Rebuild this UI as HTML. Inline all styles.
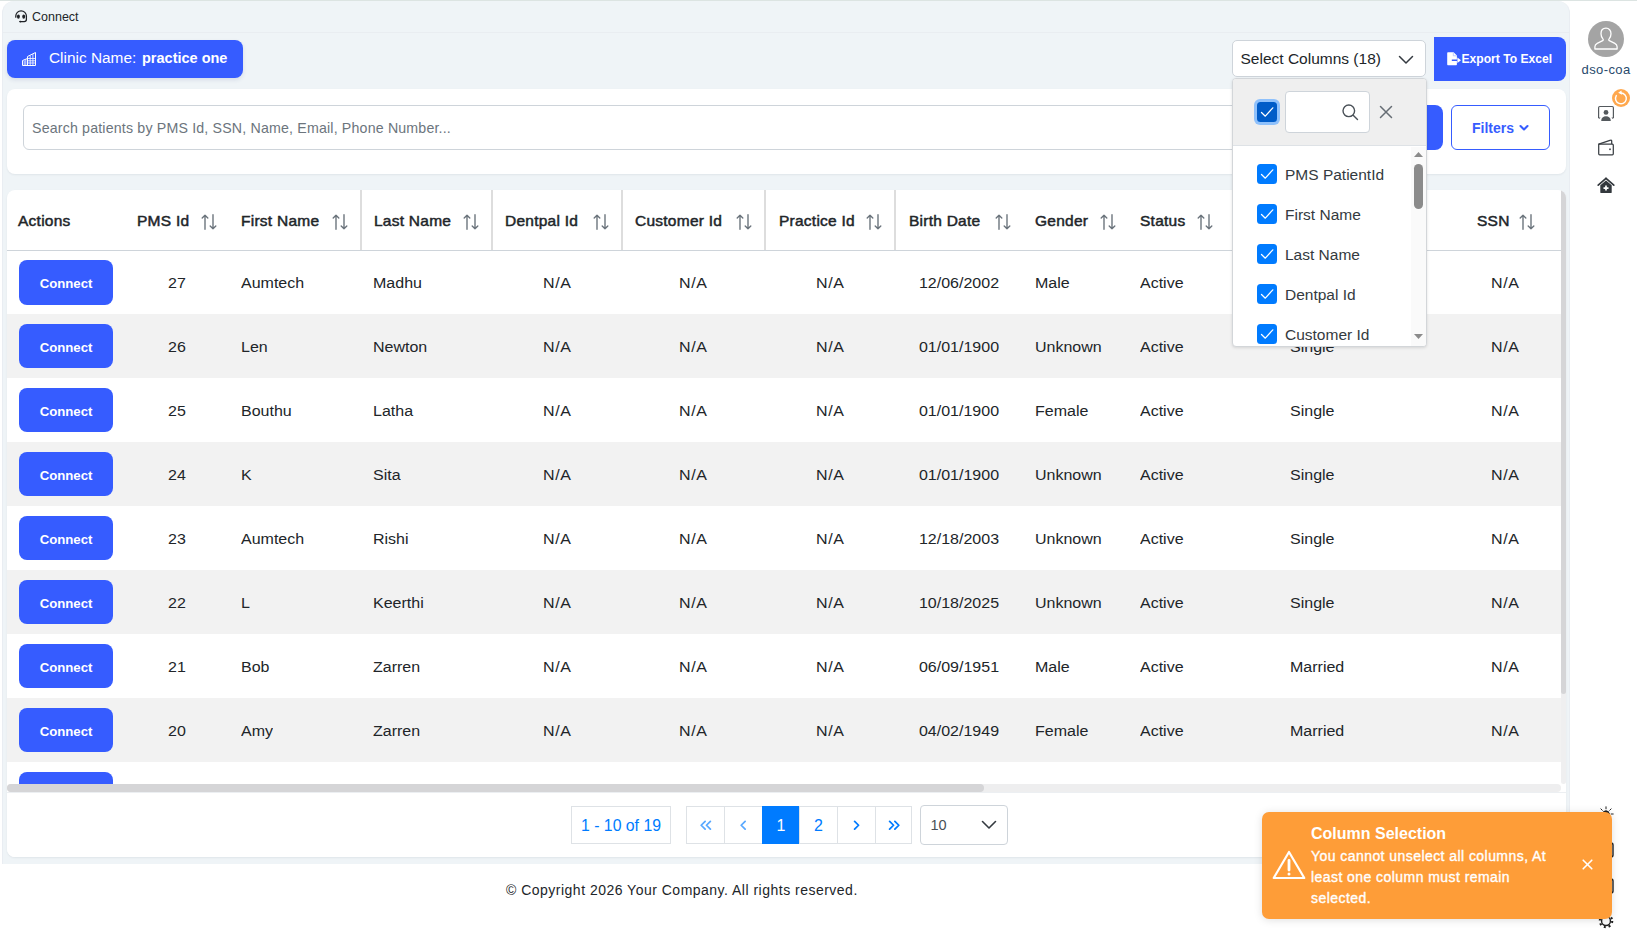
<!DOCTYPE html>
<html><head><meta charset="utf-8">
<style>
*{box-sizing:border-box;margin:0;padding:0}
html,body{width:1637px;height:939px;overflow:hidden;background:#fff;font-family:"Liberation Sans",sans-serif;color:#212529}
.abs{position:absolute}
#topstrip{left:0;top:0;width:1637px;height:1px;background:#dce4e2}
#main{left:2px;top:1px;width:1568px;height:863px;background:#eff4f7;border-radius:12px 12px 0 0;border-left:1px solid #e9edf2;border-right:1px solid #e9edf2}
#hdrline{left:2px;top:32px;width:1568px;height:1px;background:#e9edf1}
.t{position:absolute;white-space:nowrap;line-height:1}
#clinic{left:7px;top:40px;width:236px;height:38px;background:#365cff;border-radius:8px;box-shadow:0 2px 4px rgba(40,60,120,.12)}
.card{background:#fff;border-radius:8px;box-shadow:0 1px 2px rgba(56,65,74,.08)}
#searchcard{left:7px;top:89px;width:1559px;height:85px}
#searchinput{left:23px;top:105px;width:1400px;height:45px;border:1px solid #ced4da;border-radius:6px 0 0 6px;background:#fff}
#searchbtn{left:1400px;top:105px;width:43px;height:45px;background:#365cff;border-radius:0 8px 8px 0}
#filters{left:1451px;top:105px;width:99px;height:45px;border:1px solid #365cff;border-radius:6px;background:#fff}
#tablecard{left:7px;top:190px;width:1559px;height:667px;overflow:hidden}

.th{font-weight:normal;font-size:15.500px;color:#212529;-webkit-text-stroke:.5px #212529;letter-spacing:.25px;transform:scaleY(.9)}
.td{font-size:16px;color:#212529;transform:scaleY(.94)}
.cbtn{width:94px;height:44px;background:#365cff;border-radius:8px;color:#fff;font-weight:bold;font-size:13.200px;text-align:center;line-height:47px}
.pg span{position:relative;top:1px}
.pg{border:1px solid #dee2e6;background:#fff;color:#007bff;font-size:16px;display:flex;align-items:center;justify-content:center}
</style></head><body>
<div class="abs" id="topstrip"></div>
<div class="abs" id="main"></div>
<div class="abs" id="hdrline"></div>

<svg class="abs" style="left:15px;top:10px" width="13" height="13" viewBox="0 0 13 13" fill="none"><path d="M0.800 7.200V6.100a5.300 5.300 0 0 1 10.600 0V9.600c0 1.300-0.900 2.100-2.200 2.100H5.300" stroke="#1e2125" stroke-width="1.250" stroke-linecap="round"/><ellipse cx="3.400" cy="6.600" rx="1.450" ry="2.200" fill="#1e2125"/><ellipse cx="8.700" cy="6.600" rx="1.450" ry="2.200" fill="#1e2125"/><ellipse cx="5.300" cy="11.600" rx="1.200" ry=".800" fill="#1e2125"/></svg>
<div class="t" style="left:32px;top:10.5px;font-size:12.5px;color:#212529">Connect</div>


<div class="abs" style="left:1232px;top:40px;width:194px;height:37px;background:#fff;border:1px solid #ced4da;border-radius:5px"><div class="t" style="left:7.5px;top:10px;font-size:15.5px;color:#212529">Select Columns (18)</div>
<svg class="abs" style="left:165px;top:13.500px" width="16" height="10" viewBox="0 0 16 10" fill="none" stroke="#343a40" stroke-width="1.500" stroke-linecap="round" stroke-linejoin="round"><path d="M1.500 1.500L8 8L14.500 1.500"/></svg></div>
<div class="abs" style="left:1434px;top:37px;width:132px;height:44px;background:#365cff;border-radius:0 8px 8px 0"><svg class="abs" style="left:13px;top:14.800px" width="15" height="14" viewBox="0 0 15 14"><path d="M1.200 0.200h5.400l3.300 3.300v3.900h-5.100v1.600h5.100v3.200c0 0.600-0.400 1-1 1h-7.700c-0.600 0-1-0.400-1-1v-11c0-0.600 0.400-1 1-1z" fill="#fff"/><path d="M6.300 0.600v3.200h3.200" fill="none" stroke="#9fb4ff" stroke-width=".7"/><path d="M10.400 5.400L14 8.200L10.400 11z" fill="#fff"/></svg>
<div class="t" style="left:27.500px;top:16px;font-size:12.100px;font-weight:bold;color:#fff">Export To Excel</div></div>

<div class="abs" id="clinic">
<svg class="abs" style="left:15px;top:12px" width="14" height="14" viewBox="0 0 14 14" fill="none" stroke="#fff" stroke-width="1"><path d="M0.5 13.5V8.5L5.5 6.5M5.5 13.5V4.5L13.5 0.5V13.5M0.5 13.5H13.5"/><path d="M5.5 6.5H13.5M5.5 8.8H13.5M5.5 11H13.5M8.2 3.5V13.5M10.9 2V13.5M2.2 8.5V13.5M3.8 7.5V13.5" stroke-width=".8"/></svg>
<div class="t" style="left:42px;top:10.300px;font-size:15.400px;color:#fff">Clinic Name:</div>
<div class="t" style="left:135px;top:11px;font-size:14.500px;font-weight:bold;color:#fff">practice one</div>
</div>
<div class="abs card" id="searchcard"></div>
<div class="abs" id="searchinput"><div class="t" style="left:8px;top:15px;font-size:14.200px;letter-spacing:.175px;color:#6c757d">Search patients by PMS Id, SSN, Name, Email, Phone Number...</div></div>
<div class="abs" id="searchbtn"></div>
<div class="abs" id="filters"><div class="t" style="left:20px;top:14.5px;font-size:14px;font-weight:bold;color:#365cff">Filters</div>
<svg class="abs" style="left:67px;top:18px" width="10" height="8" viewBox="0 0 10 8" fill="none" stroke="#365cff" stroke-width="2.100" stroke-linecap="round" stroke-linejoin="round"><path d="M1.500 2L5 5.500L8.500 2"/></svg></div>
<div class="abs card" id="tablecard">
<!--TB-->
<div class="t th" style="left:11px;top:23.5px">Actions</div>
<div class="t th" style="left:130px;top:23.5px">PMS Id</div>
<svg class="abs" style="left:194px;top:24px" width="16" height="16" viewBox="0 0 16 16" fill="none" stroke="#6c757d" stroke-width="1.4" stroke-linecap="round" stroke-linejoin="round"><path d="M4 15.2V1.2M1.2 4L4 1.2L6.8 4M12 0.8V14.8M9.2 12L12 14.8L14.8 12"/></svg>
<div class="t th" style="left:234px;top:23.5px">First Name</div>
<svg class="abs" style="left:325px;top:24px" width="16" height="16" viewBox="0 0 16 16" fill="none" stroke="#6c757d" stroke-width="1.4" stroke-linecap="round" stroke-linejoin="round"><path d="M4 15.2V1.2M1.2 4L4 1.2L6.8 4M12 0.8V14.8M9.2 12L12 14.8L14.8 12"/></svg>
<div class="t th" style="left:367px;top:23.5px">Last Name</div>
<svg class="abs" style="left:456px;top:24px" width="16" height="16" viewBox="0 0 16 16" fill="none" stroke="#6c757d" stroke-width="1.4" stroke-linecap="round" stroke-linejoin="round"><path d="M4 15.2V1.2M1.2 4L4 1.2L6.8 4M12 0.8V14.8M9.2 12L12 14.8L14.8 12"/></svg>
<div class="t th" style="left:498px;top:23.5px">Dentpal Id</div>
<svg class="abs" style="left:586px;top:24px" width="16" height="16" viewBox="0 0 16 16" fill="none" stroke="#6c757d" stroke-width="1.4" stroke-linecap="round" stroke-linejoin="round"><path d="M4 15.2V1.2M1.2 4L4 1.2L6.8 4M12 0.8V14.8M9.2 12L12 14.8L14.8 12"/></svg>
<div class="t th" style="left:628px;top:23.5px">Customer Id</div>
<svg class="abs" style="left:729px;top:24px" width="16" height="16" viewBox="0 0 16 16" fill="none" stroke="#6c757d" stroke-width="1.4" stroke-linecap="round" stroke-linejoin="round"><path d="M4 15.2V1.2M1.2 4L4 1.2L6.8 4M12 0.8V14.8M9.2 12L12 14.8L14.8 12"/></svg>
<div class="t th" style="left:772px;top:23.5px">Practice Id</div>
<svg class="abs" style="left:859px;top:24px" width="16" height="16" viewBox="0 0 16 16" fill="none" stroke="#6c757d" stroke-width="1.4" stroke-linecap="round" stroke-linejoin="round"><path d="M4 15.2V1.2M1.2 4L4 1.2L6.8 4M12 0.8V14.8M9.2 12L12 14.8L14.8 12"/></svg>
<div class="t th" style="left:902px;top:23.5px">Birth Date</div>
<svg class="abs" style="left:988px;top:24px" width="16" height="16" viewBox="0 0 16 16" fill="none" stroke="#6c757d" stroke-width="1.4" stroke-linecap="round" stroke-linejoin="round"><path d="M4 15.2V1.2M1.2 4L4 1.2L6.8 4M12 0.8V14.8M9.2 12L12 14.8L14.8 12"/></svg>
<div class="t th" style="left:1028px;top:23.5px">Gender</div>
<svg class="abs" style="left:1093px;top:24px" width="16" height="16" viewBox="0 0 16 16" fill="none" stroke="#6c757d" stroke-width="1.4" stroke-linecap="round" stroke-linejoin="round"><path d="M4 15.2V1.2M1.2 4L4 1.2L6.8 4M12 0.8V14.8M9.2 12L12 14.8L14.8 12"/></svg>
<div class="t th" style="left:1133px;top:23.5px">Status</div>
<svg class="abs" style="left:1190px;top:24px" width="16" height="16" viewBox="0 0 16 16" fill="none" stroke="#6c757d" stroke-width="1.4" stroke-linecap="round" stroke-linejoin="round"><path d="M4 15.2V1.2M1.2 4L4 1.2L6.8 4M12 0.8V14.8M9.2 12L12 14.8L14.8 12"/></svg>
<div class="t th" style="left:1283px;top:23.5px">Marital Status</div>
<svg class="abs" style="left:1398px;top:24px" width="16" height="16" viewBox="0 0 16 16" fill="none" stroke="#6c757d" stroke-width="1.4" stroke-linecap="round" stroke-linejoin="round"><path d="M4 15.2V1.2M1.2 4L4 1.2L6.8 4M12 0.8V14.8M9.2 12L12 14.8L14.8 12"/></svg>
<div class="t th" style="left:1470px;top:23.5px">SSN</div>
<svg class="abs" style="left:1512px;top:24px" width="16" height="16" viewBox="0 0 16 16" fill="none" stroke="#6c757d" stroke-width="1.4" stroke-linecap="round" stroke-linejoin="round"><path d="M4 15.2V1.2M1.2 4L4 1.2L6.8 4M12 0.8V14.8M9.2 12L12 14.8L14.8 12"/></svg>
<div class="abs" style="left:353px;top:0;width:2px;height:61px;background:#dddddd"></div>
<div class="abs" style="left:484px;top:0;width:2px;height:61px;background:#dddddd"></div>
<div class="abs" style="left:614px;top:0;width:2px;height:61px;background:#dddddd"></div>
<div class="abs" style="left:757px;top:0;width:2px;height:61px;background:#dddddd"></div>
<div class="abs" style="left:887px;top:0;width:2px;height:61px;background:#dddddd"></div>
<div class="abs" style="left:0;top:60px;width:1554px;height:1px;background:#ced4da"></div>
<div class="abs cbtn" style="left:12px;top:70px;height:45px"><span>Connect</span></div>
<div class="t td" style="left:140px;top:85.2px;width:60px;text-align:center">27</div>
<div class="t td" style="left:234px;top:85.2px">Aumtech</div>
<div class="t td" style="left:366px;top:85.2px">Madhu</div>
<div class="t td" style="left:520.3px;top:85.2px;width:60px;text-align:center;letter-spacing:.6px">N/A</div>
<div class="t td" style="left:656.3px;top:85.2px;width:60px;text-align:center;letter-spacing:.6px">N/A</div>
<div class="t td" style="left:793.3px;top:85.2px;width:60px;text-align:center;letter-spacing:.6px">N/A</div>
<div class="t td" style="left:902px;top:85.2px;width:100px;text-align:center">12/06/2002</div>
<div class="t td" style="left:1028px;top:85.2px">Male</div>
<div class="t td" style="left:1133px;top:85.2px">Active</div>
<div class="t td" style="left:1283px;top:85.2px">Single</div>
<div class="t td" style="left:1468.3px;top:85.2px;width:60px;text-align:center;letter-spacing:.6px">N/A</div>
<div class="abs" style="left:0;top:124px;width:1554px;height:64px;background:#f2f2f2"></div>
<div class="abs cbtn" style="left:12px;top:134px"><span>Connect</span></div>
<div class="t td" style="left:140px;top:149.2px;width:60px;text-align:center">26</div>
<div class="t td" style="left:234px;top:149.2px">Len</div>
<div class="t td" style="left:366px;top:149.2px">Newton</div>
<div class="t td" style="left:520.3px;top:149.2px;width:60px;text-align:center;letter-spacing:.6px">N/A</div>
<div class="t td" style="left:656.3px;top:149.2px;width:60px;text-align:center;letter-spacing:.6px">N/A</div>
<div class="t td" style="left:793.3px;top:149.2px;width:60px;text-align:center;letter-spacing:.6px">N/A</div>
<div class="t td" style="left:902px;top:149.2px;width:100px;text-align:center">01/01/1900</div>
<div class="t td" style="left:1028px;top:149.2px">Unknown</div>
<div class="t td" style="left:1133px;top:149.2px">Active</div>
<div class="t td" style="left:1283px;top:149.2px">Single</div>
<div class="t td" style="left:1468.3px;top:149.2px;width:60px;text-align:center;letter-spacing:.6px">N/A</div>
<div class="abs cbtn" style="left:12px;top:198px"><span>Connect</span></div>
<div class="t td" style="left:140px;top:213.2px;width:60px;text-align:center">25</div>
<div class="t td" style="left:234px;top:213.2px">Bouthu</div>
<div class="t td" style="left:366px;top:213.2px">Latha</div>
<div class="t td" style="left:520.3px;top:213.2px;width:60px;text-align:center;letter-spacing:.6px">N/A</div>
<div class="t td" style="left:656.3px;top:213.2px;width:60px;text-align:center;letter-spacing:.6px">N/A</div>
<div class="t td" style="left:793.3px;top:213.2px;width:60px;text-align:center;letter-spacing:.6px">N/A</div>
<div class="t td" style="left:902px;top:213.2px;width:100px;text-align:center">01/01/1900</div>
<div class="t td" style="left:1028px;top:213.2px">Female</div>
<div class="t td" style="left:1133px;top:213.2px">Active</div>
<div class="t td" style="left:1283px;top:213.2px">Single</div>
<div class="t td" style="left:1468.3px;top:213.2px;width:60px;text-align:center;letter-spacing:.6px">N/A</div>
<div class="abs" style="left:0;top:252px;width:1554px;height:64px;background:#f2f2f2"></div>
<div class="abs cbtn" style="left:12px;top:262px"><span>Connect</span></div>
<div class="t td" style="left:140px;top:277.2px;width:60px;text-align:center">24</div>
<div class="t td" style="left:234px;top:277.2px">K</div>
<div class="t td" style="left:366px;top:277.2px">Sita</div>
<div class="t td" style="left:520.3px;top:277.2px;width:60px;text-align:center;letter-spacing:.6px">N/A</div>
<div class="t td" style="left:656.3px;top:277.2px;width:60px;text-align:center;letter-spacing:.6px">N/A</div>
<div class="t td" style="left:793.3px;top:277.2px;width:60px;text-align:center;letter-spacing:.6px">N/A</div>
<div class="t td" style="left:902px;top:277.2px;width:100px;text-align:center">01/01/1900</div>
<div class="t td" style="left:1028px;top:277.2px">Unknown</div>
<div class="t td" style="left:1133px;top:277.2px">Active</div>
<div class="t td" style="left:1283px;top:277.2px">Single</div>
<div class="t td" style="left:1468.3px;top:277.2px;width:60px;text-align:center;letter-spacing:.6px">N/A</div>
<div class="abs cbtn" style="left:12px;top:326px"><span>Connect</span></div>
<div class="t td" style="left:140px;top:341.2px;width:60px;text-align:center">23</div>
<div class="t td" style="left:234px;top:341.2px">Aumtech</div>
<div class="t td" style="left:366px;top:341.2px">Rishi</div>
<div class="t td" style="left:520.3px;top:341.2px;width:60px;text-align:center;letter-spacing:.6px">N/A</div>
<div class="t td" style="left:656.3px;top:341.2px;width:60px;text-align:center;letter-spacing:.6px">N/A</div>
<div class="t td" style="left:793.3px;top:341.2px;width:60px;text-align:center;letter-spacing:.6px">N/A</div>
<div class="t td" style="left:902px;top:341.2px;width:100px;text-align:center">12/18/2003</div>
<div class="t td" style="left:1028px;top:341.2px">Unknown</div>
<div class="t td" style="left:1133px;top:341.2px">Active</div>
<div class="t td" style="left:1283px;top:341.2px">Single</div>
<div class="t td" style="left:1468.3px;top:341.2px;width:60px;text-align:center;letter-spacing:.6px">N/A</div>
<div class="abs" style="left:0;top:380px;width:1554px;height:64px;background:#f2f2f2"></div>
<div class="abs cbtn" style="left:12px;top:390px"><span>Connect</span></div>
<div class="t td" style="left:140px;top:405.2px;width:60px;text-align:center">22</div>
<div class="t td" style="left:234px;top:405.2px">L</div>
<div class="t td" style="left:366px;top:405.2px">Keerthi</div>
<div class="t td" style="left:520.3px;top:405.2px;width:60px;text-align:center;letter-spacing:.6px">N/A</div>
<div class="t td" style="left:656.3px;top:405.2px;width:60px;text-align:center;letter-spacing:.6px">N/A</div>
<div class="t td" style="left:793.3px;top:405.2px;width:60px;text-align:center;letter-spacing:.6px">N/A</div>
<div class="t td" style="left:902px;top:405.2px;width:100px;text-align:center">10/18/2025</div>
<div class="t td" style="left:1028px;top:405.2px">Unknown</div>
<div class="t td" style="left:1133px;top:405.2px">Active</div>
<div class="t td" style="left:1283px;top:405.2px">Single</div>
<div class="t td" style="left:1468.3px;top:405.2px;width:60px;text-align:center;letter-spacing:.6px">N/A</div>
<div class="abs cbtn" style="left:12px;top:454px"><span>Connect</span></div>
<div class="t td" style="left:140px;top:469.2px;width:60px;text-align:center">21</div>
<div class="t td" style="left:234px;top:469.2px">Bob</div>
<div class="t td" style="left:366px;top:469.2px">Zarren</div>
<div class="t td" style="left:520.3px;top:469.2px;width:60px;text-align:center;letter-spacing:.6px">N/A</div>
<div class="t td" style="left:656.3px;top:469.2px;width:60px;text-align:center;letter-spacing:.6px">N/A</div>
<div class="t td" style="left:793.3px;top:469.2px;width:60px;text-align:center;letter-spacing:.6px">N/A</div>
<div class="t td" style="left:902px;top:469.2px;width:100px;text-align:center">06/09/1951</div>
<div class="t td" style="left:1028px;top:469.2px">Male</div>
<div class="t td" style="left:1133px;top:469.2px">Active</div>
<div class="t td" style="left:1283px;top:469.2px">Married</div>
<div class="t td" style="left:1468.3px;top:469.2px;width:60px;text-align:center;letter-spacing:.6px">N/A</div>
<div class="abs" style="left:0;top:508px;width:1554px;height:64px;background:#f2f2f2"></div>
<div class="abs cbtn" style="left:12px;top:518px"><span>Connect</span></div>
<div class="t td" style="left:140px;top:533.2px;width:60px;text-align:center">20</div>
<div class="t td" style="left:234px;top:533.2px">Amy</div>
<div class="t td" style="left:366px;top:533.2px">Zarren</div>
<div class="t td" style="left:520.3px;top:533.2px;width:60px;text-align:center;letter-spacing:.6px">N/A</div>
<div class="t td" style="left:656.3px;top:533.2px;width:60px;text-align:center;letter-spacing:.6px">N/A</div>
<div class="t td" style="left:793.3px;top:533.2px;width:60px;text-align:center;letter-spacing:.6px">N/A</div>
<div class="t td" style="left:902px;top:533.2px;width:100px;text-align:center">04/02/1949</div>
<div class="t td" style="left:1028px;top:533.2px">Female</div>
<div class="t td" style="left:1133px;top:533.2px">Active</div>
<div class="t td" style="left:1283px;top:533.2px">Married</div>
<div class="t td" style="left:1468.3px;top:533.2px;width:60px;text-align:center;letter-spacing:.6px">N/A</div>
<div class="abs cbtn" style="left:12px;top:582px"><span>Connect</span></div>
<div class="abs" style="left:0;top:594px;width:1554px;height:80px;background:#fff"></div>
<div class="abs" style="left:1554px;top:0;width:5px;height:594px;background:#efeff0;border-radius:3px"></div>
<div class="abs" style="left:1554px;top:0;width:5px;height:504px;background:#d5d5d7;border-radius:0 0 3px 3px"></div>
<div class="abs" style="left:0;top:594px;width:1554px;height:8px;background:#eeeeef;border-radius:4px"></div>
<div class="abs" style="left:0;top:594px;width:977px;height:8px;background:#d5d5d7;border-radius:4px"></div>
<div class="abs" style="left:0;top:602px;width:1559px;height:1px;background:#eceff2"></div>
<!--/TB-->
</div>
<div class="abs pg" style="left:571px;top:806px;width:100px;height:38px;"><span style="font-size:15.8px">1 - 10 of 19</span></div>
<div class="abs pg" style="left:686px;top:806px;width:39px;height:38px"><svg opacity=".65" width="14" height="10.5" viewBox="0 0 16 12" fill="none" stroke="#007bff" stroke-width="2" stroke-linecap="round" stroke-linejoin="round"><path d="M7 1.5L2.5 6L7 10.5M13 1.5L8.5 6L13 10.5"/></svg></div>
<div class="abs pg" style="left:724px;top:806px;width:39px;height:38px"><svg opacity=".65" width="8.75" height="10.5" viewBox="0 0 10 12" fill="none" stroke="#007bff" stroke-width="2" stroke-linecap="round" stroke-linejoin="round"><path d="M7 1.5L2.5 6L7 10.5"/></svg></div>
<div class="abs pg" style="left:762px;top:806px;width:38px;height:38px;background:#007bff;border-color:#007bff;color:#fff"><span>1</span></div>
<div class="abs pg" style="left:799px;top:806px;width:39px;height:38px"><span>2</span></div>
<div class="abs pg" style="left:837px;top:806px;width:39px;height:38px"><svg width="8.75" height="10.5" viewBox="0 0 10 12" fill="none" stroke="#007bff" stroke-width="2" stroke-linecap="round" stroke-linejoin="round"><path d="M3 1.5L7.5 6L3 10.5"/></svg></div>
<div class="abs pg" style="left:875px;top:806px;width:37px;height:38px"><svg width="14" height="10.5" viewBox="0 0 16 12" fill="none" stroke="#007bff" stroke-width="2" stroke-linecap="round" stroke-linejoin="round"><path d="M3 1.5L7.5 6L3 10.5M9 1.5L13.5 6L9 10.5"/></svg></div>
<div class="abs" style="left:920px;top:805px;width:88px;height:40px;border:1px solid #ced4da;border-radius:4px;background:#fff"><div class="t" style="left:9.500px;top:11.500px;font-size:14.500px;color:#495057">10</div>
<svg class="abs" style="left:59.500px;top:14px" width="16" height="10" viewBox="0 0 16 10" fill="none" stroke="#343a40" stroke-width="1.6" stroke-linecap="round" stroke-linejoin="round"><path d="M1.5 1.5L8 8L14.5 1.5"/></svg></div>

<div class="t" style="left:506px;top:883px;font-size:14px;letter-spacing:.49px;color:#212529">© Copyright 2026 Your Company. All rights reserved.</div>

<div class="abs" style="left:1588px;top:21px;width:36px;height:36px;border-radius:50%;background:#a4a4a4"></div>
<svg class="abs" style="left:1588px;top:21px" width="36" height="36" viewBox="0 0 36 36" fill="none" stroke="#fff" stroke-width="1.3" stroke-linejoin="round"><path d="M18 7.2c-3 0-5 2.200-5 5.600c0 2.200 0.800 4.100 2.000 5.300c0.500 0.500 0.300 1.200-0.300 1.600l-5.500 2.600c-1.400 0.700-2.300 1.800-2.300 3.400v2.300h22.200v-2.300c0-1.600-0.900-2.700-2.300-3.400l-5.500-2.600c-0.600-0.400-0.800-1.100-0.300-1.600c1.200-1.200 2.000-3.100 2.000-5.300c0-3.400-2-5.600-5-5.600z"/></svg>
<div class="t" style="left:1581.5px;top:63px;font-size:13px;letter-spacing:.4px;color:#294a6c">dso-coa</div>
<!-- user screen icon -->
<svg class="abs" style="left:1597px;top:105px" width="18" height="17" viewBox="0 0 18 17" fill="none"><path d="M1.600 13V2.700c0-0.700 0.500-1.200 1.200-1.200h12.400c0.700 0 1.200 0.500 1.200 1.200V13" stroke="#54595d" stroke-width="1.200"/><path d="M1 12.400h2.600l-1.500 1.600zM17 12.400h-2.600l1.500 1.600z" fill="#54595d"/><circle cx="9" cy="7.400" r="2.400" fill="#54595d"/><path d="M4.200 15.900c0-3 2.100-4.600 4.800-4.600s4.800 1.600 4.800 4.600z" fill="#54595d"/></svg>
<div class="abs" style="left:1612px;top:89px;width:18px;height:18px;border-radius:50%;background:#ffa84e"></div>
<svg class="abs" style="left:1612px;top:89px" width="18" height="18" viewBox="0 0 18 18" fill="none"><path d="M8.900 4A5.400 5.400 0 1 1 4.300 6.600" stroke="#fff" stroke-width="1.400" stroke-linecap="round"/><path d="M6.200 3.700L9.400 1.400L10 5.800z" fill="#fff"/></svg>
<!-- wallet -->
<svg class="abs" style="left:1597px;top:139px" width="18" height="17" viewBox="0 0 18 17" fill="none" stroke="#3a3f44" stroke-width="1.250" stroke-linejoin="round"><path d="M1.700 5.200h13.600c0.600 0 1 0.400 1 1v8.600c0 0.600-0.400 1-1 1H2.700c-0.600 0-1-0.400-1-1z"/><path d="M1.700 5.200L13.700 1.200c0.500-0.200 1 0.200 1 0.700V5"/><rect x="12.200" y="9.500" width="1.600" height="1.600" fill="#3a3f44" stroke="none"/></svg>
<!-- home -->
<svg class="abs" style="left:1597px;top:177px" width="18" height="17" viewBox="0 0 18 17"><path d="M9 1.300L1.200 8.200" stroke="#33383d" stroke-width="1.700" fill="none" stroke-linecap="round"/><path d="M9 1.300L16.800 8.200" stroke="#33383d" stroke-width="1.700" fill="none" stroke-linecap="round"/><path d="M3.300 8.300L9 3.400L14.700 8.300V15.200c0 0.500-0.400 0.900-0.900 0.900H4.200c-0.500 0-0.900-0.400-0.900-0.900z" fill="#33383d"/><path d="M9 8.600v5M6.500 11.100h5" stroke="#fff" stroke-width="1.700"/></svg>
<!-- bottom icons (mostly hidden by toast) -->
<svg class="abs" style="left:1598px;top:806px" width="16" height="16" viewBox="0 0 16 16" fill="none" stroke="#222" stroke-width="1" stroke-linecap="round"><circle cx="8" cy="8" r="3.200" fill="#222"/><path d="M8 0.800v2M8 13.200v2M0.800 8h2M13.200 8h2M2.900 2.900l1.400 1.400M11.700 11.700l1.400 1.400M2.900 13.100l1.400-1.400M11.700 4.300l1.400-1.400"/></svg>
<svg class="abs" style="left:1598px;top:842px" width="16" height="16" viewBox="0 0 16 16" fill="none" stroke="#222" stroke-width="1.400"><rect x="1" y="1" width="14" height="14" rx="2"/></svg>
<svg class="abs" style="left:1598px;top:878px" width="16" height="16" viewBox="0 0 16 16" fill="none" stroke="#222" stroke-width="1.400"><rect x="1" y="1" width="14" height="14" rx="2"/></svg>
<svg class="abs" style="left:1598px;top:913px" width="16" height="16" viewBox="0 0 18 18" fill="none" stroke="#222"><circle cx="9" cy="9" r="5" stroke-width="1.600"/><circle cx="9" cy="9" r="7" stroke-width="2.400" stroke-dasharray="2.200 3.300"/></svg>

<div class="abs" id="dd" style="left:1232px;top:78px;width:195px;height:269px;background:#fff;border:1px solid #d3d6d9;border-radius:4px;overflow:hidden;box-shadow:0 1px 3px rgba(0,0,0,.12)">
<div class="abs" style="left:0;top:0;width:193px;height:67px;background:#efefef;border-bottom:1px solid #dee2e6"></div>
<div class="abs" style="left:21px;top:20px;width:26px;height:26px;border-radius:6px;background:#8fc1fb"></div>
<svg class="abs" style="left:24px;top:23px" width="20" height="20" viewBox="0 0 20 20"><rect width="20" height="20" rx="3.500" fill="#005cc8"/><path d="M4.500 10.500L8.300 14.200L15.800 5.800" fill="none" stroke="#fff" stroke-width="1.250" stroke-linecap="round" stroke-linejoin="round"/></svg>
<div class="abs" style="left:52px;top:12px;width:85px;height:42px;background:#fff;border:1px solid #ced4da;border-radius:4px"></div>
<svg class="abs" style="left:108px;top:24px" width="18" height="18" viewBox="0 0 18 18" fill="none" stroke="#495057" stroke-width="1.400" stroke-linecap="round"><circle cx="7.800" cy="7.800" r="5.800"/><path d="M12.200 12.200L16.500 16.500"/></svg>
<svg class="abs" style="left:146px;top:26px" width="14" height="14" viewBox="0 0 14 14" fill="none" stroke="#666d74" stroke-width="1.500" stroke-linecap="round"><path d="M1.500 1.500L12.500 12.500M12.500 1.500L1.500 12.500"/></svg>
<svg class="abs" style="left:24px;top:85px" width="20" height="20" viewBox="0 0 20 20"><rect width="20" height="20" rx="3.500" fill="#007bff"/><path d="M4.500 10.500L8.300 14.200L15.800 5.800" fill="none" stroke="#fff" stroke-width="1.250" stroke-linecap="round" stroke-linejoin="round"/></svg>
<div class="t" style="left:52px;top:88px;font-size:15.500px;color:#343a40">PMS PatientId</div>
<svg class="abs" style="left:24px;top:125px" width="20" height="20" viewBox="0 0 20 20"><rect width="20" height="20" rx="3.500" fill="#007bff"/><path d="M4.500 10.500L8.300 14.200L15.800 5.800" fill="none" stroke="#fff" stroke-width="1.250" stroke-linecap="round" stroke-linejoin="round"/></svg>
<div class="t" style="left:52px;top:128px;font-size:15.500px;color:#343a40">First Name</div>
<svg class="abs" style="left:24px;top:165px" width="20" height="20" viewBox="0 0 20 20"><rect width="20" height="20" rx="3.500" fill="#007bff"/><path d="M4.500 10.500L8.300 14.200L15.800 5.800" fill="none" stroke="#fff" stroke-width="1.250" stroke-linecap="round" stroke-linejoin="round"/></svg>
<div class="t" style="left:52px;top:168px;font-size:15.500px;color:#343a40">Last Name</div>
<svg class="abs" style="left:24px;top:205px" width="20" height="20" viewBox="0 0 20 20"><rect width="20" height="20" rx="3.500" fill="#007bff"/><path d="M4.500 10.500L8.300 14.200L15.800 5.800" fill="none" stroke="#fff" stroke-width="1.250" stroke-linecap="round" stroke-linejoin="round"/></svg>
<div class="t" style="left:52px;top:208px;font-size:15.500px;color:#343a40">Dentpal Id</div>
<svg class="abs" style="left:24px;top:245px" width="20" height="20" viewBox="0 0 20 20"><rect width="20" height="20" rx="3.500" fill="#007bff"/><path d="M4.500 10.500L8.300 14.200L15.800 5.800" fill="none" stroke="#fff" stroke-width="1.250" stroke-linecap="round" stroke-linejoin="round"/></svg>
<div class="t" style="left:52px;top:248px;font-size:15.500px;color:#343a40">Customer Id</div>
<div class="abs" style="left:178px;top:68px;width:15px;height:199px;background:#fafafa"></div>
<svg class="abs" style="left:181px;top:73px" width="9" height="5" viewBox="0 0 9 5"><path d="M0 5L4.500 0L9 5z" fill="#8b8b8b"/></svg>
<div class="abs" style="left:181px;top:85px;width:9px;height:45px;border-radius:4.500px;background:#8b8b8b"></div>
<svg class="abs" style="left:181px;top:255px" width="9" height="5" viewBox="0 0 9 5"><path d="M0 0L4.500 5L9 0z" fill="#8b8b8b"/></svg>
</div>

<div class="abs" style="left:1262px;top:812px;width:350px;height:107px;background:#fe9d38;border-radius:7px;box-shadow:0 1px 8px rgba(0,0,0,.13)">
<svg class="abs" style="left:10px;top:38px" width="34" height="30" viewBox="0 0 34 30" fill="none" stroke="#fff" stroke-width="2.200" stroke-linejoin="round"><path d="M17 2L32.300 28H1.700z"/><path d="M17 10.500v9.500" stroke-width="2.800" stroke-linecap="round"/><circle cx="17" cy="24" r="1.500" fill="#fff" stroke="none"/></svg>
<div class="t" style="left:49px;top:14px;font-size:16px;font-weight:bold;color:#fff">Column Selection</div>
<div class="t" style="left:49px;top:33.500px;font-size:14px;letter-spacing:.44px;line-height:21px;color:#fff;-webkit-text-stroke:.35px #fff;white-space:normal;width:260px">You cannot unselect all columns, At least one column must remain selected.</div>
<svg class="abs" style="left:320px;top:47px" width="11" height="11" viewBox="0 0 11 11" fill="none" stroke="#fff" stroke-width="1.600" stroke-linecap="round"><path d="M1.200 1.200L9.800 9.800M9.800 1.200L1.200 9.800"/></svg>
</div>

</body></html>
